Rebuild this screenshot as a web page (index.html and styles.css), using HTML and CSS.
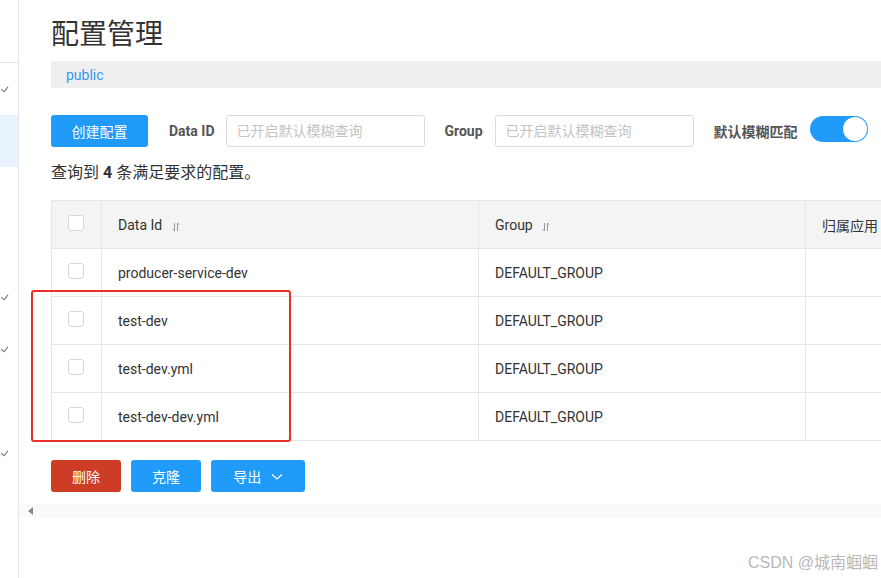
FILE: index.html
```html
<!DOCTYPE html>
<html lang="zh-CN">
<head>
    <meta charset="UTF-8">
    <meta name="viewport" content="width=device-width, initial-scale=1.0">
    <title>配置管理</title>
    <link rel="stylesheet" href="styles.css">
</head>
<body>
    <div class="sidebar">
        <div class="side-top"></div>
        <div class="side-item"><svg class="arrow" viewBox="0 0 10 8"><path d="M1 3.5 L4.5 6.5 L9 1" /></svg></div>
        <div class="side-item active"></div>
        <div class="side-item"></div>
        <div class="side-item"></div>
        <div class="side-item"><svg class="arrow" viewBox="0 0 10 8"><path d="M1 3.5 L4.5 6.5 L9 1" /></svg></div>
        <div class="side-item"><svg class="arrow" viewBox="0 0 10 8"><path d="M1 3.5 L4.5 6.5 L9 1" /></svg></div>
        <div class="side-item"></div>
        <div class="side-item"><svg class="arrow" viewBox="0 0 10 8"><path d="M1 3.5 L4.5 6.5 L9 1" /></svg></div>
    </div>

    <div class="main">
        <div class="content">
            <h1 class="page-title">配置管理</h1>
            <div class="crumb"><span>public</span></div>

            <div class="toolbar">
                <button class="btn btn-primary btn-create">创建配置</button>
                <label class="field-label label-id">Data ID</label>
                <input class="field-input" type="text" placeholder="已开启默认模糊查询">
                <label class="field-label">Group</label>
                <input class="field-input" type="text" placeholder="已开启默认模糊查询">
                <label class="field-label">默认模糊匹配</label>
                <span class="switch"><span class="knob"></span></span>
            </div>

            <p class="summary">查询到 <b>4</b> 条满足要求的配置。</p>

            <div class="table-wrap">
                <table class="config-table">
                    <thead>
                        <tr>
                            <th class="col-check"><span class="checkbox"></span></th>
                            <th class="col-id">Data Id <svg class="sort" viewBox="0 0 8 10"><path d="M2.5 1 V9 M0.8 7.2 L2.5 9 M5.5 9 V1 L7.2 2.8" /></svg></th>
                            <th class="col-group">Group <svg class="sort" viewBox="0 0 8 10"><path d="M2.5 1 V9 M0.8 7.2 L2.5 9 M5.5 9 V1 L7.2 2.8" /></svg></th>
                            <th class="col-app">归属应用</th>
                        </tr>
                    </thead>
                    <tbody>
                        <tr>
                            <td class="col-check"><span class="checkbox"></span></td>
                            <td>producer-service-dev</td>
                            <td>DEFAULT_GROUP</td>
                            <td></td>
                        </tr>
                        <tr>
                            <td class="col-check"><span class="checkbox"></span></td>
                            <td>test-dev</td>
                            <td>DEFAULT_GROUP</td>
                            <td></td>
                        </tr>
                        <tr>
                            <td class="col-check"><span class="checkbox"></span></td>
                            <td>test-dev.yml</td>
                            <td>DEFAULT_GROUP</td>
                            <td></td>
                        </tr>
                        <tr>
                            <td class="col-check"><span class="checkbox"></span></td>
                            <td>test-dev-dev.yml</td>
                            <td>DEFAULT_GROUP</td>
                            <td></td>
                        </tr>
                    </tbody>
                </table>
                <div class="highlight-box"></div>
            </div>

            <div class="actions">
                <button class="btn btn-danger">删除</button>
                <button class="btn btn-primary">克隆</button>
                <button class="btn btn-primary btn-export">导出 <svg class="chevron" viewBox="0 0 12 8"><path d="M1 1.5 L6 6 L11 1.5" /></svg></button>
            </div>
        </div>

        <div class="scroll-strip"><span class="scroll-left"></span></div>
    </div>

    <div class="watermark">CSDN @城南蝈蝈</div>
</body>
</html>
```

FILE: styles.css
```css
body {
    margin: 0;
    display: flex;
    height: 100vh;
    overflow: hidden;
    background: #fff;
    color: #333;
    font-family: Roboto, "Noto Sans CJK SC", sans-serif;
}

/* left menu, mostly cut off */
.sidebar {
    width: 18px;
    flex-shrink: 0;
    border-right: 1px solid #e6e6e6;
    overflow: hidden;
}

.side-top {
    height: 62px;
    border-bottom: 1px solid #e6e6e6;
}

.side-item {
    height: 52px;
    display: flex;
    align-items: center;
}

.side-item.active {
    background-color: #e8f3fd;
}

.arrow {
    width: 9px;
    height: 7px;
    fill: none;
    stroke: #777;
    stroke-width: 1.2;
}

.main {
    flex-grow: 1;
    min-width: 0;
    overflow: hidden;
}

.content {
    padding-left: 32px;
}

.page-title {
    margin: 0;
    padding-top: 15px;
    height: 46px;
    font-size: 28px;
    line-height: 40px;
    font-weight: normal;
    color: #333;
}

.crumb {
    height: 27px;
    background-color: #efefef;
    display: flex;
    align-items: center;
    padding-left: 15px;
    font-size: 14px;
    color: #2f9af2;
}

.toolbar {
    margin-top: 27px;
    height: 32px;
    display: flex;
    align-items: center;
    white-space: nowrap;
}

.btn {
    height: 32px;
    border: none;
    border-radius: 3px;
    color: #fff;
    font-size: 14px;
    font-family: inherit;
    padding: 0;
    cursor: pointer;
}

.btn-primary {
    background-color: #209bfa;
}

.btn-danger {
    background-color: #cd3c25;
}

.btn-create {
    width: 97px;
}

.field-label {
    margin-left: 20px;
    margin-right: 12px;
    font-size: 14px;
    font-weight: bold;
    color: #555;
}

.field-label.label-id {
    margin-left: 21px;
    margin-right: 11px;
}

.field-input {
    width: 199px;
    height: 32px;
    box-sizing: border-box;
    border: 1px solid #dcdcdc;
    border-radius: 3px;
    padding: 0 10px;
    font-size: 14px;
    font-family: inherit;
    color: #333;
}

.field-input::placeholder {
    color: #c4c4c4;
}

.switch {
    position: relative;
    width: 58px;
    height: 26px;
    margin-top: -5px;
    border-radius: 13px;
    background-color: #209bfa;
    flex-shrink: 0;
}

.knob {
    position: absolute;
    right: 1px;
    top: 1px;
    width: 24px;
    height: 24px;
    border-radius: 50%;
    background: #fff;
}

.summary {
    margin: 16px 0 0;
    height: 37px;
    line-height: 20px;
    font-size: 16px;
    color: #333;
}

.table-wrap {
    position: relative;
}

.config-table {
    width: 1000px;
    border-collapse: collapse;
    font-size: 14px;
    color: #333;
}

.config-table th,
.config-table td {
    height: 47px;
    padding: 0 0 0 16px;
    border: 1px solid #e6e6e6;
    text-align: left;
    white-space: nowrap;
}

.config-table th {
    background-color: #f4f4f4;
    font-weight: normal;
}

.config-table .col-check {
    width: 33px;
    padding-left: 16px;
}

.col-id {
    width: 360px;
}

.col-group {
    width: 310px;
}

.checkbox {
    display: block;
    width: 14px;
    height: 14px;
    border: 1px solid #d6d6d6;
    border-radius: 3px;
    background: #fff;
    margin-top: -4px;
}

.sort {
    width: 8px;
    height: 10px;
    margin-left: 6px;
    vertical-align: -2px;
    fill: none;
    stroke: #999;
    stroke-width: 1;
}

.highlight-box {
    position: absolute;
    left: -20px;
    top: 90px;
    width: 256px;
    height: 148px;
    border: 2px solid #e8302a;
    border-radius: 3px;
}

.actions {
    margin-top: 19px;
    display: flex;
    gap: 10px;
}

.actions .btn {
    width: 70px;
}

.actions .btn-export {
    width: 94px;
}

.chevron {
    width: 12px;
    height: 8px;
    margin-left: 6px;
    vertical-align: 1px;
    fill: none;
    stroke: #fff;
    stroke-width: 1.3;
}

.scroll-strip {
    margin-top: 12px;
    height: 14px;
    background-color: #fafafa;
    display: flex;
    align-items: center;
}

.scroll-left {
    margin-left: 9px;
    width: 0;
    height: 0;
    border-top: 4px solid transparent;
    border-bottom: 4px solid transparent;
    border-right: 5px solid #888;
}

.watermark {
    position: absolute;
    right: 3px;
    bottom: 5px;
    font-size: 16px;
    color: #b8b8b8;
    font-family: "Liberation Sans", "Noto Sans CJK SC", sans-serif;
}
```
